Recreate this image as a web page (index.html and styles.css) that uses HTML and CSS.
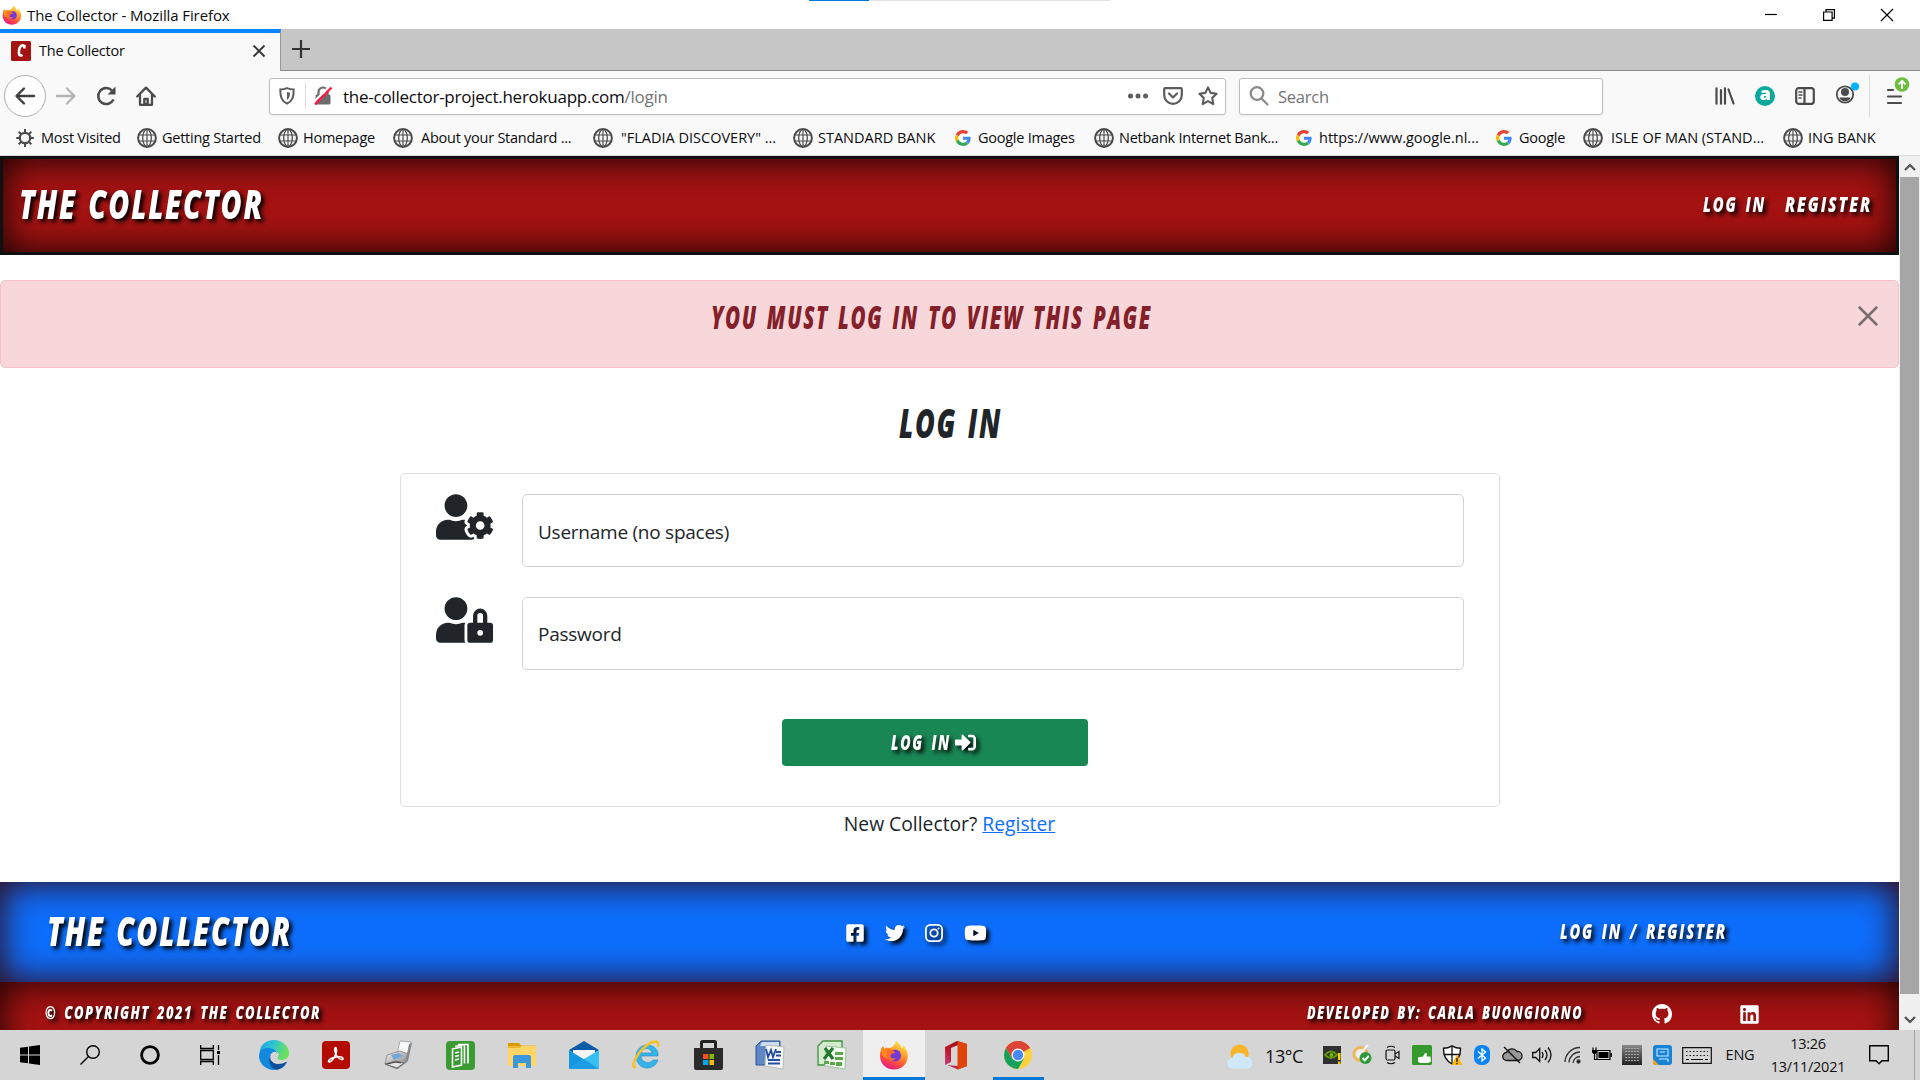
FILE: index.html
```html
<!DOCTYPE html>
<html lang="en">
<head>
<meta charset="utf-8">
<title>The Collector</title>
<link rel="stylesheet" href="styles.css">
</head>
<body>
<svg class="sprite" width="0" height="0" aria-hidden="true">
  <defs>
    <linearGradient id="ff" x1=".8" y1="0" x2=".3" y2="1"><stop offset="0" stop-color="#fff44f"/><stop offset=".4" stop-color="#ff9a2b"/><stop offset=".7" stop-color="#ff4f3d"/><stop offset="1" stop-color="#e31587"/></linearGradient>
    <linearGradient id="edgeTop" x1="0" y1="0" x2="1" y2=".3"><stop offset="0" stop-color="#1b9de2"/><stop offset=".5" stop-color="#30c5d2"/><stop offset="1" stop-color="#6be05a"/></linearGradient>
    <linearGradient id="steel" x1="0" y1="0" x2="1" y2="1"><stop offset="0" stop-color="#f4f4f4"/><stop offset="1" stop-color="#777"/></linearGradient>
    <linearGradient id="office" x1="0" y1="1" x2="1" y2="0"><stop offset="0" stop-color="#c255a0"/><stop offset=".4" stop-color="#c2152c"/><stop offset="1" stop-color="#7a0f0f"/></linearGradient>
    <linearGradient id="mesh" x1="0" y1="0" x2="0" y2="1"><stop offset="0" stop-color="#888"/><stop offset="1" stop-color="#222"/></linearGradient>
  </defs>
  <symbol id="globe" viewBox="0 0 20 20"><g fill="none" stroke="#4b4b4b"><circle cx="10" cy="10" r="8.9" stroke-width="2"/><ellipse cx="10" cy="10" rx="4.3" ry="8.6" stroke-width="1.3"/><path d="M1.8 7h16.4M1.8 13h16.4M10 1v18" stroke-width="1.2"/></g></symbol>
  <symbol id="google" viewBox="0 0 48 48"><circle cx="24" cy="24" r="24" fill="#fff"/><path fill="#EA4335" d="M24 9.5c3.54 0 6.71 1.22 9.21 3.6l6.85-6.85C35.9 2.38 30.47 0 24 0 14.62 0 6.51 5.38 2.56 13.22l7.98 6.19C12.43 13.72 17.74 9.5 24 9.5z"/><path fill="#4285F4" d="M46.98 24.55c0-1.57-.15-3.09-.38-4.55H24v9.02h12.94c-.58 2.96-2.26 5.48-4.78 7.18l7.73 6c4.51-4.18 7.09-10.36 7.09-17.65z"/><path fill="#FBBC05" d="M10.53 28.59c-.48-1.45-.76-2.99-.76-4.59s.27-3.14.76-4.59l-7.98-6.19C.92 16.46 0 20.12 0 24s.92 7.54 2.56 10.78l7.97-6.19z"/><path fill="#34A853" d="M24 48c6.48 0 11.93-2.13 15.89-5.81l-7.73-6c-2.15 1.45-4.92 2.3-8.16 2.3-6.26 0-11.57-4.22-13.47-9.91l-7.98 6.19C6.51 42.62 14.62 48 24 48z"/></symbol>
  <symbol id="firefox" viewBox="0 0 30 30"><path fill="url(#ff)" d="M17 1c5 3 5 6 5.500 7.500C24 7.500 24 6 23.800 5c4 4 5.700 8.500 4.800 13.500C27.500 25 22 29.500 15 29.500 7 29.500 1 23.500 1 16 1 12 2 9 4 6.500L5 9c2-1.500 4-1.500 5-1 3 0 6-3 7-7z"/><path fill="#ff8a16" d="M2 9l2-3 1 3c3-2 5-1 8 1l3 3-4 2-2 4-6-2z"/><circle cx="16" cy="15.500" r="6" fill="#7139d6"/><path fill="#ff6a2c" d="M8 10c4-1 7 0 8.500 3-3 0-5 1-5 3s2 3 5 2c-1 4-9 4-9-3z"/></symbol>
  <symbol id="brand-c" viewBox="0 0 20 20"><rect width="20" height="20" rx="1.500" fill="#a51212"/><path d="M13.200 7.500l.3-2.500c-2.500-1.500-5 0-5.500 4.500-.5 4.500.5 6 3.500 4.300" fill="none" stroke="#fff" stroke-width="2.600"/></symbol>
</svg>

<header class="titlebar">
  <svg width="20" height="20"><use href="#firefox"/></svg>
  <span class="title">The Collector - Mozilla Firefox</span>
  <div class="progress"><i></i></div>
  <div class="winbtns">
    <svg width="12" height="12" fill="none" stroke="#000" stroke-width="1.200"><path d="M0 5.500h12"/></svg>
    <svg width="12" height="12" fill="none" stroke="#000" stroke-width="1.200"><path d="M.6 3h8.500v8.400H.6zM3 3V.6h8.400v8.600H9"/></svg>
    <svg width="12" height="12" fill="none" stroke="#000" stroke-width="1.200"><path d="M0 0l12 12M12 0L0 12"/></svg>
  </div>
</header>

<div class="tabs">
  <div class="tab">
    <svg width="20" height="20"><use href="#brand-c"/></svg>
    <span>The Collector</span>
    <svg width="12" height="12" fill="none" stroke="#333" stroke-width="1.800"><path d="M.5 .5l11 11M11.500 .5l-11 11"/></svg>
  </div>
  <svg class="plus" width="18" height="18" fill="none" stroke="#333" stroke-width="2.200"><path d="M9 0v18M0 9h18"/></svg>
</div>

<div class="toolbar">
  <div class="nav-left">
    <div class="back"><svg width="20" height="18" viewBox="0 0 20 18" fill="none" stroke="#3f3f3f" stroke-width="2.400" stroke-linecap="round" stroke-linejoin="round"><path d="M19 9H2M9 1.500L1.500 9 9 16.500"/></svg></div>
    <svg width="20" height="18" viewBox="0 0 20 18" fill="none" stroke="#b5b5b5" stroke-width="2.400" stroke-linecap="round" stroke-linejoin="round"><path d="M1 9h17M11 1.500L18.500 9 11 16.500"/></svg>
    <svg width="20" height="20" viewBox="0 0 20 20" fill="none" stroke="#4b4b4b" stroke-width="2.500"><path d="M17.500 13.500A8 8 0 1 1 16 4.500"/><path d="M19.500 .5v8h-8z" fill="#4b4b4b" stroke="none"/></svg>
    <svg width="20" height="20" viewBox="0 0 20 20" fill="none" stroke="#4b4b4b" stroke-width="2.300" stroke-linejoin="round" stroke-linecap="round"><path d="M1.200 10.500L10 1.600l8.800 8.900M4 9v9.800h12V9"/><path d="M8.300 18v-5h3.400v5z"/></svg>
  </div>
  <div class="urlbar">
    <svg width="16" height="18" viewBox="0 0 16 18" fill="none" stroke="#5c5c5c"><path d="M8 1.200c2 .9 4.300 1.300 6.700 1.300 0 7-.9 11.300-6.700 14.200C2.200 13.800 1.300 9.500 1.300 2.500 3.700 2.500 6 2.100 8 1.200z" stroke-width="2"/><path d="M8 5v8c2-1.400 3-3.300 3-7.200z" fill="#5c5c5c" stroke="none"/></svg>
    <i class="sep"></i>
    <svg width="18" height="20" viewBox="0 0 18 20"><path d="M4.500 9V6a4.500 4.500 0 0 1 9 0v3" fill="none" stroke="#6b6b6b" stroke-width="2.200"/><rect x="1.500" y="8.500" width="15" height="10" rx="1.500" fill="#6b6b6b"/><path d="M-.5 16L16 0" stroke="#fff" stroke-width="2"/><path d="M1 18.500L17.500 1.500" stroke="#ff1744" stroke-width="2.300"/></svg>
    <span class="url">the-collector-project.herokuapp.com<em>/login</em></span>
    <div class="urlactions">
      <svg width="20" height="6" fill="#5c5c5c"><circle cx="2.500" cy="3" r="2.500"/><circle cx="10" cy="3" r="2.500"/><circle cx="17.500" cy="3" r="2.500"/></svg>
      <svg width="20" height="18" viewBox="0 0 20 18" fill="none" stroke="#5c5c5c" stroke-width="2.200" stroke-linecap="round" stroke-linejoin="round"><path d="M2 1.200h16q.8 0 .8.800v6a8.800 8.800 0 0 1-17.600 0V2q0-.8.8-.8zM6 6.500l4 4 4-4"/></svg>
      <svg width="20" height="20" viewBox="0 0 20 20" fill="none" stroke="#5c5c5c" stroke-width="2.100" stroke-linejoin="round"><path d="M10 1.400l2.600 5.500 6 .8-4.400 4.200 1.100 6.200-5.300-3-5.300 3 1.100-6.200L1.400 7.700l6-.8z"/></svg>
    </div>
  </div>
  <div class="search">
    <svg width="20" height="20" viewBox="0 0 20 20" fill="none" stroke="#8a8a8a" stroke-width="2.300" stroke-linecap="round"><circle cx="8" cy="7.500" r="6.300"/><path d="M12.500 12.500l6 6"/></svg>
    <span>Search</span>
  </div>
  <div class="nav-right">
    <svg width="20" height="18" viewBox="0 0 20 18" stroke="#4b4b4b" stroke-width="2.200" stroke-linecap="round"><path d="M1.500 1.300v15.400M6 3v13.700M10 1.300v15.400M13.500 2.500l5 14"/></svg>
    <div class="ask">a</div>
    <svg width="20" height="18" viewBox="0 0 20 18" fill="none" stroke="#4b4b4b" stroke-width="2.200"><rect x="1.200" y="1.200" width="17.600" height="15.600" rx="2.500"/><path d="M9.500 1v16"/><path d="M3.500 5h4M3.500 8h4M3.500 11h3" stroke-width="1.300"/></svg>
    <svg width="25" height="22" viewBox="0 0 25 22"><circle cx="10" cy="12.500" r="8.200" fill="none" stroke="#4b4b4b" stroke-width="1.800"/><circle cx="10" cy="10" r="4" fill="#4b4b4b"/><path d="M4.500 15.500h11c-1 5-10 5-11 0z" fill="#4b4b4b"/><circle cx="20" cy="4.500" r="4" fill="#00b3ff"/></svg>
    <i class="sep"></i>
    <svg width="24" height="28" viewBox="0 0 24 28"><path d="M2 13h5M2 19.500h13M2 26h13" stroke="#4b4b4b" stroke-width="2.200" stroke-linecap="round"/><circle cx="16" cy="7.500" r="7.300" fill="#6cbe3d"/><path d="M16 12V4M12.500 7.300L16 3.800l3.500 3.500" fill="none" stroke="#fff" stroke-width="1.900"/></svg>
  </div>
</div>

<nav class="bookmarks">
  <div><svg width="20" height="20" viewBox="0 0 20 20" fill="none" stroke="#4b4b4b"><circle cx="9" cy="10" r="5.200" stroke-width="2.200"/><path d="M9 1v4M9 15v4M.2 10h4M13.800 10h4M2.700 3.700l2.800 2.800M12.500 13.500l2.800 2.800M15.300 3.700l-2.800 2.800M5.500 13.500l-2.800 2.800" stroke-width="2"/></svg><span>Most Visited</span></div>
  <div><svg width="20" height="20"><use href="#globe"/></svg><span>Getting Started</span></div>
  <div><svg width="20" height="20"><use href="#globe"/></svg><span>Homepage</span></div>
  <div class="wide"><svg width="20" height="20"><use href="#globe"/></svg><span>About your Standard ...</span></div>
  <div class="wide caps"><svg width="20" height="20"><use href="#globe"/></svg><span>"FLADIA DISCOVERY" ...</span></div>
  <div class="caps"><svg width="20" height="20"><use href="#globe"/></svg><span>STANDARD BANK</span></div>
  <div class="g"><svg width="16" height="16"><use href="#google"/></svg><span>Google Images</span></div>
  <div><svg width="20" height="20"><use href="#globe"/></svg><span>Netbank Internet Bank...</span></div>
  <div class="g caps"><svg width="16" height="16"><use href="#google"/></svg><span>https://www.google.nl...</span></div>
  <div class="g"><svg width="16" height="16"><use href="#google"/></svg><span>Google</span></div>
  <div class="wide caps"><svg width="20" height="20"><use href="#globe"/></svg><span>ISLE OF MAN (STAND...</span></div>
  <div class="caps"><svg width="20" height="20"><use href="#globe"/></svg><span>ING BANK</span></div>
</nav>

<div class="viewport">
  <div class="page">
    <div class="navbar">
      <svg class="comic shadow" width="243" height="30"><text class="xl" y="30" textLength="245" lengthAdjust="spacingAndGlyphs">THE COLLECTOR</text></svg>
      <div class="links">
        <svg class="comic shadow" width="62" height="15"><text class="md" y="15" textLength="63" lengthAdjust="spacingAndGlyphs">LOG IN</text></svg>
        <svg class="comic shadow" width="85" height="15"><text class="md" y="15" textLength="87" lengthAdjust="spacingAndGlyphs">REGISTER</text></svg>
      </div>
    </div>

    <div class="alert">
      <svg class="comic" width="439" height="23"><text class="lg" y="23" textLength="441" lengthAdjust="spacingAndGlyphs">YOU MUST LOG IN TO VIEW THIS PAGE</text></svg>
      <svg class="close" width="20" height="20" fill="none" stroke="#7b6c6e" stroke-width="2.500" stroke-linecap="round"><path d="M1.500 1.500l17 17M18.500 1.500l-17 17"/></svg>
    </div>

    <svg class="comic heading" width="101" height="30"><text class="xl" y="29" textLength="103" lengthAdjust="spacingAndGlyphs">LOG IN</text></svg>

    <div class="card">
      <div class="field">
        <svg width="57" height="46" viewBox="0 0 640 512" fill="#212529"><path d="M610.500 373.300c2.600-14.100 2.600-28.500 0-42.600l25.800-14.900c3-1.700 4.300-5.200 3.300-8.500-6.700-21.600-18.200-41.200-33.200-57.400-2.300-2.500-6-3.100-9-1.400l-25.800 14.900c-10.900-9.300-23.400-16.500-36.900-21.300v-29.800c0-3.400-2.400-6.400-5.700-7.100-22.300-5-45-4.800-66.200 0-3.300.7-5.700 3.700-5.700 7.100v29.800c-13.500 4.800-26 12-36.900 21.300l-25.800-14.900c-2.900-1.700-6.700-1.100-9 1.400-15 16.200-26.500 35.800-33.200 57.400-1 3.300.4 6.800 3.300 8.500l25.800 14.900c-2.600 14.100-2.600 28.500 0 42.600l-25.800 14.900c-3 1.700-4.300 5.200-3.300 8.500 6.700 21.600 18.200 41.100 33.200 57.400 2.300 2.500 6 3.100 9 1.400l25.800-14.900c10.900 9.300 23.400 16.500 36.900 21.300v29.800c0 3.400 2.400 6.400 5.700 7.100 22.300 5 45 4.800 66.200 0 3.300-.7 5.700-3.700 5.700-7.100v-29.800c13.500-4.800 26-12 36.900-21.300l25.800 14.900c2.900 1.700 6.700 1.100 9-1.400 15-16.200 26.500-35.800 33.200-57.400 1-3.300-.4-6.800-3.300-8.500l-25.800-14.900zM496 400.500c-26.800 0-48.500-21.800-48.500-48.500s21.800-48.500 48.500-48.500 48.500 21.800 48.500 48.500-21.700 48.500-48.500 48.500zM224 256c70.700 0 128-57.300 128-128S294.700 0 224 0 96 57.300 96 128s57.300 128 128 128zm201.200 226.500c-2.300-1.200-4.600-2.600-6.800-3.900l-7.900 4.600c-6 3.400-12.800 5.300-19.600 5.300-10.900 0-21.400-4.600-28.900-12.600-18.300-19.800-32.300-43.900-40.200-69.600-5.500-17.700 1.900-36.400 17.900-45.700l7.900-4.600c-.1-2.600-.1-5.200 0-7.800l-7.900-4.600c-16-9.200-23.400-28-17.900-45.700.9-2.900 2.200-5.800 3.200-8.700-3.800-.3-7.500-1.200-11.400-1.200h-16.700c-22.200 10.200-46.900 16-72.900 16s-50.600-5.800-72.900-16h-16.700C60.200 288 0 348.200 0 422.400V464c0 26.500 21.500 48 48 48h352c10.100 0 19.500-3.200 27.200-8.500-1.200-3.800-2-7.700-2-11.800v-9.200z"/></svg>
        <div class="input">Username (no spaces)</div>
      </div>
      <div class="field">
        <svg width="57" height="46" viewBox="0 0 640 512" fill="#212529"><path d="M224 256A128 128 0 1 0 96 128a128 128 0 0 0 128 128zm96 64a63.080 63.080 0 0 1 8.100-30.500c-4.800-.5-9.500-1.500-14.500-1.500h-16.700a174.080 174.080 0 0 1-145.800 0h-16.700A134.430 134.430 0 0 0 0 422.400V464a48 48 0 0 0 48 48h280.900a63.540 63.540 0 0 1-8.900-32zm288-32h-32v-80a80 80 0 0 0-160 0v80h-32a32 32 0 0 0-32 32v160a32 32 0 0 0 32 32h224a32 32 0 0 0 32-32V320a32 32 0 0 0-32-32zM496 432a32 32 0 1 1 32-32 32 32 0 0 1-32 32zm32-144h-64v-80a32 32 0 0 1 64 0z"/></svg>
        <div class="input second">Password</div>
      </div>
      <div class="button">
        <svg class="comic shadow" width="58" height="15"><text class="md" y="15" textLength="60" lengthAdjust="spacingAndGlyphs">LOG IN</text></svg>
        <svg class="shadow" width="21" height="21" viewBox="0 0 512 512" fill="#fff"><path d="M416 448h-84c-6.600 0-12-5.400-12-12v-40c0-6.600 5.400-12 12-12h84c17.700 0 32-14.300 32-32V160c0-17.700-14.300-32-32-32h-84c-6.600 0-12-5.400-12-12V76c0-6.600 5.400-12 12-12h84c53 0 96 43 96 96v192c0 53-43 96-96 96zm-47-209L201 71c-15-15-41-4.500-41 17v96H24c-13.300 0-24 10.700-24 24v96c0 13.300 10.700 24 24 24h136v96c0 21.500 26 32 41 17l168-168c9.300-9.400 9.300-24.600 0-34z"/></svg>
      </div>
    </div>
    <p class="new">New Collector? <a>Register</a></p>

    <footer>
      <div class="foot-blue">
        <svg class="comic shadow" width="242" height="30"><text class="xl" y="29" textLength="245" lengthAdjust="spacingAndGlyphs">THE COLLECTOR</text></svg>
        <div class="social">
          <svg class="shadow" width="18" height="20" viewBox="0 0 448 512" fill="#fff"><path d="M400 32H48A48 48 0 0 0 0 80v352a48 48 0 0 0 48 48h137.250V327.690h-63V256h63v-54.640c0-62.150 37-96.480 93.670-96.480 27.140 0 55.520 4.840 55.520 4.840v61h-31.270c-30.810 0-40.420 19.120-40.420 38.730V256h68.780l-11 71.690h-57.780V480H400a48 48 0 0 0 48-48V80a48 48 0 0 0-48-48z"/></svg>
          <svg class="shadow" width="20" height="20" viewBox="0 0 512 512" fill="#fff"><path d="M459.370 151.716c.325 4.548.325 9.097.325 13.645 0 138.720-105.583 298.558-298.558 298.558-59.452 0-114.680-17.219-161.137-47.106 8.447.974 16.568 1.299 25.340 1.299 49.055 0 94.213-16.568 130.274-44.832-46.132-.975-84.792-31.188-98.112-72.772 6.498.974 12.995 1.624 19.818 1.624 9.421 0 18.843-1.300 27.614-3.573-48.081-9.747-84.143-51.980-84.143-102.985v-1.299c13.969 7.797 30.214 12.670 47.431 13.319-28.264-18.843-46.781-51.005-46.781-87.391 0-19.492 5.197-37.360 14.294-52.954 51.655 63.675 129.300 105.258 216.365 109.807-1.624-7.797-2.599-15.918-2.599-24.040 0-57.828 46.782-104.934 104.934-104.934 30.213 0 57.502 12.670 76.670 33.137 23.715-4.548 46.456-13.320 66.599-25.340-7.798 24.366-24.366 44.833-46.132 57.827 21.117-2.273 41.584-8.122 60.426-16.243-14.292 20.791-32.161 39.308-52.628 54.253z"/></svg>
          <svg class="shadow" width="18" height="20" viewBox="0 0 18 20" fill="none" stroke="#fff" stroke-width="1.800"><rect x=".9" y="1.900" width="16.200" height="16.200" rx="4.500"/><circle cx="9" cy="10" r="3.700"/><circle cx="13.600" cy="5.500" r=".6" stroke-width="1"/></svg>
          <svg class="shadow" width="23" height="20" viewBox="0 0 576 512" fill="#fff"><path d="M549.655 124.083c-6.281-23.650-24.787-42.276-48.284-48.597C458.781 64 288 64 288 64S117.220 64 74.629 75.486c-23.497 6.322-42.003 24.947-48.284 48.597-11.412 42.867-11.412 132.305-11.412 132.305s0 89.438 11.412 132.305c6.281 23.650 24.787 41.500 48.284 47.821C117.220 448 288 448 288 448s170.780 0 213.371-11.486c23.497-6.321 42.003-24.171 48.284-47.821 11.412-42.867 11.412-132.305 11.412-132.305s0-89.438-11.412-132.305zm-317.510 213.508V175.185l142.739 81.205-142.739 81.201z"/></svg>
        </div>
        <svg class="comic shadow" width="166" height="15"><text class="md" y="14" textLength="167" lengthAdjust="spacingAndGlyphs">LOG IN / REGISTER</text></svg>
      </div>
      <div class="foot-red">
        <svg class="comic shadow" width="274" height="13"><text class="sm" y="13" textLength="276" lengthAdjust="spacingAndGlyphs">© COPYRIGHT 2021 THE COLLECTOR</text></svg>
        <svg class="comic shadow dev" width="275" height="13"><text class="sm" y="13" textLength="276" lengthAdjust="spacingAndGlyphs">DEVELOPED BY: CARLA BUONGIORNO</text></svg>
        <svg class="gh" width="20" height="20" viewBox="0 0 16 16" fill="#fff"><path d="M8 0C3.580 0 0 3.580 0 8c0 3.540 2.290 6.530 5.470 7.590.4.070.55-.17.55-.38 0-.19-.01-.82-.01-1.490-2.010.37-2.530-.49-2.690-.94-.09-.23-.48-.94-.82-1.130-.28-.15-.68-.52-.01-.53.63-.01 1.080.58 1.230.82.72 1.210 1.870.87 2.330.66.070-.52.28-.87.51-1.070-1.780-.2-3.640-.89-3.640-3.950 0-.87.31-1.590.82-2.150-.08-.2-.36-1.020.08-2.120 0 0 .67-.21 2.200.82.64-.18 1.320-.27 2-.27s1.360.09 2 .27c1.530-1.040 2.200-.82 2.200-.82.44 1.100.16 1.920.08 2.120.51.56.82 1.270.82 2.150 0 3.070-1.870 3.750-3.650 3.950.29.25.54.73.54 1.480 0 1.070-.01 1.930-.01 2.200 0 .21.15.46.55.38A8.010 8.010 0 0 0 16 8c0-4.420-3.580-8-8-8z"/></svg>
        <svg width="19" height="21" viewBox="0 0 448 512" fill="#fff"><path d="M416 32H31.900C14.300 32 0 46.500 0 64.300v383.400C0 465.500 14.300 480 31.900 480H416c17.600 0 32-14.500 32-32.300V64.300c0-17.800-14.400-32.300-32-32.300zM135.400 416H69V202.200h66.500V416zm-33.200-243c-21.300 0-38.500-17.300-38.500-38.500S80.900 96 102.200 96c21.200 0 38.500 17.300 38.500 38.500 0 21.300-17.200 38.500-38.500 38.500zm282.100 243h-66.400V312c0-24.800-.5-56.700-34.500-56.700-34.600 0-39.900 27-39.900 54.900V416h-66.400V202.200h63.700v29.200h.9c8.900-16.800 30.600-34.500 62.200-34.500 66.500 0 78.900 43.800 78.900 100.900V416z"/></svg>
      </div>
    </footer>
  </div>
  <div class="scroll">
    <svg width="12" height="8" fill="none" stroke="#505050" stroke-width="2.200"><path d="M1 7l5-5 5 5"/></svg>
    <div class="thumb"></div>
    <svg class="down" width="12" height="8" fill="none" stroke="#505050" stroke-width="2.200"><path d="M1 1l5 5 5-5"/></svg>
  </div>
</div>

<div class="taskbar">
  <div class="sys">
    <div><svg width="20" height="20"><path d="M0 2.800L8 1.700v7.800H0zM9 1.500L20 0v9.500H9zM0 10.500h8v7.800L0 17.200zM9 10.500h11V20L9 18.500z"/></svg></div>
    <div><svg width="21" height="20" fill="none" stroke="#000" stroke-width="1.400"><circle cx="13" cy="7" r="6.300"/><path d="M8.500 11.500L.5 19.500"/></svg></div>
    <div><svg width="20" height="20" fill="none" stroke="#000" stroke-width="2.800"><circle cx="10" cy="10" r="8.400"/></svg></div>
    <div><svg width="20" height="20" fill="none" stroke="#000" stroke-width="1.300"><path d="M.7 0v3.500h12.600V0M.7 5.500h12.600v9H.7zM.7 20v-3.500h12.600V20M18.500 0v5M18.500 10v10"/><path d="M17 6h3v3h-3z" fill="#000" stroke="none"/></svg></div>
  </div>
  <div class="apps">
    <div><svg width="30" height="30" viewBox="0 0 30 30"><path fill="url(#edgeTop)" d="M.5 13C1 5 7 0 15 0c8 0 15 6 15 13 0 5-4 7-8 7-3 0-4-1-3-2.500 2-3 0-6.500-4-6.500C9 11 3 10 .5 13z"/><path fill="#1188de" d="M.5 13C2 8.500 8 7 13 8.500c3 1 5 3.500 5 5-1-2-3-2-4.500-1C9 15 9 24 17 29.800 8 31 0 24 0 16z"/><path fill="#0d4f9e" d="M13 13c-4 4-1 11 6 11 4 0 7-1.500 9-2.500C26 27 21 30 16.500 29.800 9 26 8.500 17 13 13z"/></svg></div>
    <div><svg width="28" height="28" viewBox="0 0 28 28"><rect width="28" height="28" rx="4" fill="#b30b00"/><path d="M6.500 20.500c0-2.500 5-4 8-4.500 3-.5 6 0 6.500 1.500.3 1.500-2.500 1.200-4.500-.5C13.500 14.500 12 8.500 13 7c1.500-1.500 2 2.500.8 6C12.500 17 8 22.500 6.500 20.500z" fill="none" stroke="#fff" stroke-width="1.600"/></svg></div>
    <div><svg width="28" height="30" viewBox="0 0 28 30"><path d="M16 1l11 1-4 14-10-2z" fill="#f6f8fa" stroke="#999" stroke-width=".8"/><path d="M3 15l13-4 9 3-4 9-8 6L1 24z" fill="url(#steel)" stroke="#777" stroke-width=".7"/><path d="M7 15l8-2 4 3-9 4z" fill="#70a9d8"/><path d="M1 24l11-3 8 2-7 5z" fill="#e4e4e4" stroke="#555" stroke-width=".8"/><path d="M3 24l9-2 5 1" fill="none" stroke="#444" stroke-width="1.200"/><path d="M25 4l3-1-4 18-3 3z" fill="#888"/></svg></div>
    <div><svg width="29" height="29" viewBox="0 0 29 29"><rect width="29" height="29" rx="4" fill="#3c9a32"/><g fill="none" stroke="#fff" stroke-width="1.600"><path d="M6.500 8l9-2v18l-9 2zM9 5.500l9.500-2v19M12 3.500h10v19M9 12l4-1M9 15.500l4-1M9 19l4-1"/></g></svg></div>
    <div><svg width="28" height="26" viewBox="0 0 28 26"><path d="M0 1h11l2 2.500h15V24H0z" fill="#f0b429"/><path d="M0 1h11l2 3H0z" fill="#d99a00"/><path d="M0 6h12l2-2h14v20H0z" fill="#ffd567"/><path d="M5 26V15q0-2 2-2h14q2 0 2 2v11h-5v-5h-8v5z" fill="#3d97dc"/></svg></div>
    <div><svg width="30" height="28" viewBox="0 0 30 28"><path d="M0 9L15 0l15 9-15 10z" fill="#0a5ca8"/><path d="M4 9h22v8l-11 5-11-5z" fill="#f4f4f4"/><path d="M0 9v19h30z" fill="#1596e0"/><path d="M30 9v19H0l15-10z" fill="#38c0f2"/><path d="M0 28l15-10 15 10z" fill="#1c9de4"/></svg></div>
    <div><svg width="31" height="30" viewBox="0 0 31 30"><path d="M25 16H10c0 6 8 9 12 4h5c-2 6-7 8-11 8-7 0-11-6-11-12S10 5 16 5s12 4 11 11zM10 13h11c-1-6-10-6-11 0z" fill="#35b4e8" fill-rule="evenodd" stroke="#1e88c8" stroke-width=".6"/><path d="M5 27C-2 28 6 13 15 6c6-5 14-7 12 1" fill="none" stroke="#f5c22b" stroke-width="2.600"/></svg></div>
    <div><svg width="29" height="30" viewBox="0 0 29 30"><path d="M7.500 8V2.500q0-1 1-1h12q1 0 1 1V8" fill="none" stroke="#222" stroke-width="3"/><path d="M0 8h29v20q0 2-2 2H2q-2 0-2-2z" fill="#2b2b2b"/><path d="M9 14h5.500v5H9z" fill="#f25022"/><path d="M15.500 14H20v5h-4.500z" fill="#7fba00"/><path d="M9 20h5.500v5H9z" fill="#00a4ef"/><path d="M15.500 20H20v5h-4.500z" fill="#ffb900"/></svg></div>
    <div><svg width="28" height="28" viewBox="0 0 28 28"><path d="M5 0h19v24H0V5z" fill="#5f87c4" stroke="#2a5298"/><path d="M6 1h17v4H4z" fill="#cfdcf0"/><path d="M10 4l18 2-1 22-18-3z" fill="#f5f7fb" stroke="#bbb"/><path d="M10 8l2 8 3-7 2 7 3-8M20 11h5M20 14.500h5M12 19h12M12 22.500h12" fill="none" stroke="#23509d" stroke-width="1.900"/></svg></div>
    <div><svg width="28" height="28" viewBox="0 0 28 28"><path d="M5 0h19v24H0V5z" fill="#d5ebcd" stroke="#3f9142" stroke-width="1.300"/><path d="M8 5l20 2-1 21-20-3z" fill="#f4faf2" stroke="#9bc49b"/><path d="M7 7l8 11M15 7L6 18" stroke="#1e7a2a" stroke-width="3.200"/><path d="M17 11h8v3h-8zM17 16h8v3h-8zM6 20h5v3H6zM12 21h5v3h-5zM18 21h6v4h-6z" fill="#5ea84c"/></svg></div>
    <div class="active"><svg width="30" height="30"><use href="#firefox"/></svg></div>
    <div><svg width="24" height="30" viewBox="0 0 24 30"><path d="M1 7l12-6 10 3v22l-9 3.500L3 25l11 1V5L7 8v14l-6 3z" fill="url(#office)"/><path d="M13.500 1L23 4v22l-9.500 3.500z" fill="#e0430a"/></svg></div>
    <div class="open"><svg width="28" height="28" viewBox="0 0 28 28"><circle cx="14" cy="14" r="14" fill="#fdd23e"/><path d="M14 14L1.900 7A14 14 0 0 1 26.100 7z" fill="#dc4437"/><path d="M14 7h12.100a14 14 0 0 0-24.200 0L8 17.500z" fill="#dc4437"/><path d="M1.900 7a14 14 0 0 0 12.100 21l6-10.500h-6L8 17.500z" fill="#16a05d"/><circle cx="14" cy="14" r="6.500" fill="#fff"/><circle cx="14" cy="14" r="5.200" fill="#4a8af4"/></svg></div>
  </div>
  <div class="weather">
    <svg width="27" height="25" viewBox="0 0 28 26"><circle cx="13" cy="10" r="9.500" fill="#fbb52a"/><path d="M6 25.500a5.500 5.500 0 0 1-.5-11 7.500 7.500 0 0 1 14-1 6 6 0 0 1 2 12z" fill="#cfe8fa"/></svg>
    <span>13°C</span>
  </div>
  <div class="tray">
    <div><svg width="18" height="18"><path d="M0 0h18v18H0z" fill="#2f2f2f"/><path d="M2 9q6-7 12 0-6 6-12 0z" fill="none" stroke="#5f9400" stroke-width="2"/><circle cx="8.500" cy="9" r="2" fill="#76b900"/><path d="M15 7h2.500v7H15zM15 15.500h2.500V18H15z" fill="#ffce00"/></svg></div>
    <div><svg width="20" height="20"><circle cx="8.500" cy="9" r="6.500" fill="#eee" stroke="#eeb65a" stroke-width="3"/><path d="M8 9l8-9" stroke="#f5f5f5" stroke-width="2"/><circle cx="13.500" cy="13" r="6" fill="#2c9a3c"/><path d="M10.500 13l2.300 2.300 4-4.500" fill="none" stroke="#fff" stroke-width="2"/></svg></div>
    <div><svg width="15" height="20" fill="none" stroke="#111" stroke-width="1.200"><rect x="1" y="5" width="9" height="10" rx="1.500"/><path d="M10 9l4-2.500v7L10 11M2 2.500Q6 0 10 2.500M2 17.500Q6 20 10 17.500"/></svg></div>
    <div><svg width="20" height="20"><rect width="20" height="20" rx="1.500" fill="#35992b"/><path d="M6 16.500v-4l5-1 2-3.500 2 .5-.5 3h4l.5 5-3 1.500H8z" fill="#fff"/></svg></div>
    <div><svg width="20" height="20"><path d="M10 .8q4 2.500 8.500 2.500Q19 14 10 19 1 14 1.500 3.300 6 3.300 10 .8z" fill="#fff" stroke="#111" stroke-width="1.400"/><path d="M10 1v18M1.500 9.500h17" stroke="#111" stroke-width="1.300"/><path d="M15 9.500L20.500 20H9.500z" fill="#fdb813"/><path d="M15 13v4M15 18v1.300" stroke="#111" stroke-width="1.300"/></svg></div>
    <div><svg width="16" height="20"><rect width="16" height="20" rx="7" fill="#0a84f5"/><path d="M4 6.500l7.500 6.500L8 16V4l3.500 3L4 13.500" fill="none" stroke="#fff" stroke-width="1.300"/></svg></div>
    <div><svg width="20" height="18"><path d="M5 14.500a4 4 0 0 1-.5-8A6 6 0 0 1 15 5.500a4.500 4.500 0 0 1 1 9z" fill="#999" stroke="#111" stroke-width="1.300"/><path d="M2 1l16 16" stroke="#111" stroke-width="1.500"/></svg></div>
    <div><svg width="20" height="18" fill="none" stroke="#111" stroke-width="1.300"><path d="M.7 6.500h3l4-4v13l-4-4h-3zM10 6q2 3 0 6M13 4q4 5 0 10M16 1.500q6 7.500 0 15"/></svg></div>
    <div><svg width="17" height="18" fill="none" stroke="#333" stroke-width="1.300"><path d="M1 16A15 15 0 0 1 16 1.500M5 16.500A11 11 0 0 1 16 6M9 17A7 7 0 0 1 16 10.500"/><circle cx="14.500" cy="15.500" r="1.500" fill="#111"/></svg></div>
    <div><svg width="20" height="16"><path d="M5 3.500h13v9H5z" fill="#d5d5d5" stroke="#000" stroke-width="1.200"/><path d="M6.500 5h10v6h-10zM18.500 6H20v4h-1.500zM0 3h5v2.500q-2.500 3-5 0z"/><path d="M2.500 7v5.500H5M1 .5V3M4 .5V3" fill="none" stroke="#000" stroke-width="1.200"/></svg></div>
    <div><svg width="20" height="20"><path d="M0 0h20v20H0z" fill="url(#mesh)"/><path d="M3 3.500h14M3 6.500h14M3 9.500h14M3 12.500h14M3 15.500h14" stroke="#aaa" stroke-width="1" stroke-dasharray="2 1"/></svg></div>
    <div><svg width="19" height="20"><rect width="19" height="20" rx="3" fill="#1583d6"/><path d="M0 14l6 6H3q-3 0-3-3z" fill="#f7a11a"/><path d="M4 4h11v7H4zM7 7h5M6 14h9v3" fill="none" stroke="#cfe9ff" stroke-width="1.100"/></svg></div>
  </div>
  <div class="kbd"><svg width="30" height="17" fill="none" stroke="#111" stroke-width="1.200"><path d="M.7 .7h28.600v15.600H.7z"/><path d="M4 4.500h22M4 8.500h22" stroke-dasharray="1.500 2"/><path d="M4 12.500h3M9 12.500h12M23 12.500h3"/></svg></div>
  <div class="lang">ENG</div>
  <div class="clock"><span>13:26</span><span>13/11/2021</span></div>
  <div class="notif"><svg width="20" height="20" fill="none" stroke="#000" stroke-width="1.400"><path d="M.7 .7h18.600v15H13l-3 3-3-3H.7z"/></svg></div>
</div>
</body>
</html>
```
FILE: styles.css
```css
* { box-sizing: border-box; }
body { margin: 0; width: 1920px; height: 1080px; overflow: hidden; background: #fff; color: #0c0c0d; font: 14.5px/20px "Open Sans", "Noto Sans", sans-serif; letter-spacing: -0.25px; display: flex; flex-direction: column; }
svg { display: block; flex: none; overflow: visible; }
.sprite { position: absolute; }

.titlebar { position: relative; height: 29px; flex: none; display: flex; align-items: center; padding-left: 2px; gap: 5px; }
.titlebar .title { white-space: nowrap; font-size: 15px; letter-spacing: -0.1px; }
.progress { position: absolute; left: 809px; top: 0; width: 301px; height: 1px; background: #e3e3e3; }
.progress i { display: block; width: 60px; height: 1px; background: #0078d7; }
.winbtns { margin-left: auto; display: flex; gap: 46px; padding-right: 27px; }

.tabs { height: 42px; flex: none; background: #c6c6c6; border-bottom: 1px solid #888; display: flex; align-items: center; }
.tab { width: 281px; height: 42px; margin-bottom: -1px; background: #f9f9fa; border-top: 4px solid #0a84ff; border-right: 1px solid #999; display: flex; align-items: center; padding: 0 15px 2px 11px; }
.tab span { margin-left: 8px; flex: 1; }
.plus { margin: 0 0 2px 11px; }

.toolbar { height: 50px; flex: none; background: #f9f9fa; display: flex; align-items: center; }
.nav-left { width: 269px; display: flex; align-items: center; padding-left: 4px; gap: 20px; }
.nav-left .back { width: 42px; height: 42px; margin-right: -10px; border: 1px solid #b1b1b1; border-radius: 50%; background: #fff; display: flex; align-items: center; justify-content: center; }
.urlbar, .search { height: 37px; background: #fff; border: 1px solid #bdbdbd; border-radius: 3px; display: flex; align-items: center; box-shadow: 0 1px 3px rgba(0,0,0,.06); }
.urlbar { width: 957px; padding-left: 9px; }
.sep { width: 1px; height: 26px; background: #dcdcdc; margin: 0 8px 0 10px; }
.url { margin-left: 11px; font-size: 17px; letter-spacing: -0.25px; padding-top: 1px; }
.url em { font-style: normal; color: #737373; }
.urlactions { margin-left: auto; display: flex; align-items: center; gap: 15px; padding-right: 7px; }
.search { width: 364px; margin-left: 13px; padding-left: 9px; gap: 9px; color: #737373; font-size: 16.500px; }
.search span { padding-top: 1px; }
.nav-right { flex: 1; height: 50px; display: flex; align-items: center; padding-left: 112px; }
.ask { width: 20px; height: 20px; margin: 0 20px; border-radius: 50%; background: #0ba89b; color: #fff; font: 800 18px/15px "Open Sans", sans-serif; text-align: center; }
.nav-right svg:nth-of-type(3) { margin: -6px 0 0 20px; }
.nav-right .sep { height: 42px; margin: 0 16px 0 9px; }
.nav-right svg:last-child { margin-top: -10px; }

.bookmarks { height: 35px; flex: none; background: #f9f9fa; border-bottom: 1px solid #d9d9da; padding: 0 0 0 16px; display: grid; grid-template-columns: 121px 141px 115px 200px 200px 160px 141px 200px 200px 89px 200px 130px; }
.bookmarks div { display: flex; align-items: center; gap: 5px; white-space: nowrap; }
.bookmarks .wide { gap: 8px; }
.bookmarks .g { padding-left: 2px; gap: 7px; }
.bookmarks .caps { letter-spacing: 0; }

.viewport { height: 874px; flex: none; display: flex; overflow: hidden; }
.page { width: 1899px; height: 874px; overflow: hidden; background: #fff; color: #212529; font-size: 19px; display: flex; flex-direction: column; }
.comic { font-family: "Open Sans", sans-serif; font-weight: 800; font-style: italic; letter-spacing: 2.500px; word-spacing: 3px; fill: currentColor; }
.xl { font-size: 40px; }
.lg { font-size: 31px; }
.md { font-size: 20.500px; }
.sm { font-size: 18px; letter-spacing: 2px; }
.shadow { color: #fff; filter: drop-shadow(3px 3px 2px #000); }

.navbar { height: 99px; flex: none; border: 3px solid #101010; background: #a51212; box-shadow: inset 0 0 34px 2px rgba(0,0,0,.85); display: flex; align-items: center; justify-content: space-between; padding: 0 26px 3px 16px; }
.links { display: flex; gap: 20px; }

.alert { height: 88px; flex: none; margin-top: 25px; border: 1px solid #f5c2c7; border-radius: 5px; background: #f8d7da; color: #842029; display: grid; grid-template-columns: 1fr 439px 1fr; padding-right: 39px; }
.alert .comic { grid-column: 2; margin-top: 25px; }
.alert .close { justify-self: end; margin: 25px -19px 0 0; }

.heading { margin: 41px 0 34px 899px; }

.card { width: 1100px; height: 334px; flex: none; margin-left: 400px; border: 1px solid #dfdfdf; border-radius: 5px; padding: 20px 35px 0 35px; display: flex; flex-direction: column; }
.field { display: flex; gap: 29px; height: 73px; margin-bottom: 30px; flex: none; }
.input { flex: 1; border: 1px solid #ced4da; border-radius: 5px; padding: 3px 0 0 15px; display: flex; align-items: center; }
.input.second { padding-top: 0; }
.button { width: 306px; height: 47px; margin: 19px 0 0 346px; padding-right: 4px; border-radius: 4px; background: #198754; display: flex; align-items: center; justify-content: center; gap: 6px; }
.new { margin: 5px 0 0; height: 24px; line-height: 24px; text-align: center; flex: none; font-size: 19.300px; letter-spacing: 0; }
.new a { color: #0d6efd; text-decoration: underline; }

footer { margin-top: 46px; flex: none; }
.foot-blue { height: 100px; background: #0d6efd; box-shadow: inset 0 0 34px 2px rgba(55,0,0,.95); display: grid; grid-template-columns: 799px 714px 166px; align-items: center; padding-left: 47px; }
.social { display: flex; align-items: center; gap: 21px; padding-top: 2px; }
.social svg:nth-child(3) { margin-left: -1px; }
.foot-red { height: 100px; background: #a51212; box-shadow: inset 0 0 34px 2px rgba(0,0,0,.85); display: flex; align-items: flex-start; padding: 24px 0 0 45px; }
.foot-red .dev { margin-left: 988px; }
.foot-red .gh { margin: -2px 68px 0 70px; }
.foot-red svg:last-child { margin-top: -2px; }

.scroll { width: 21px; background: #f0f0f0; display: flex; flex-direction: column; align-items: center; padding-top: 7px; }
.thumb { width: 19px; height: 817px; margin-top: 6px; background: #a6a6a6; }
.down { margin-top: 22px; }

.taskbar { height: 50px; flex: none; background: #d5d5d5; color: #111; display: flex; align-items: stretch; letter-spacing: -0.25px; }
.taskbar div { display: flex; align-items: center; justify-content: center; flex: none; }
.sys > div { width: 60px; }
.apps { margin-left: 3px; }
.apps > div { width: 62px; height: 50px; }
.apps .active { background: #efefef; box-shadow: inset 0 -3px #0078d7; }
.apps .open { background: linear-gradient(#0078d7, #0078d7) 50% 100% / 51px 3px no-repeat; }
.taskbar .weather { width: 268px; padding: 2px 0 0 178px; justify-content: flex-start; gap: 11px; font-size: 18px; letter-spacing: -0.4px; }
.tray > div { width: 30px; }
.kbd { width: 40px; }
.lang { width: 46px; }
.taskbar .clock { width: 90px; flex-direction: column; line-height: 23px; }
.notif { width: 52px; }
.taskbar::after { content: ""; width: 1px; background: #a5a5a5; margin-left: 9px; }
```
